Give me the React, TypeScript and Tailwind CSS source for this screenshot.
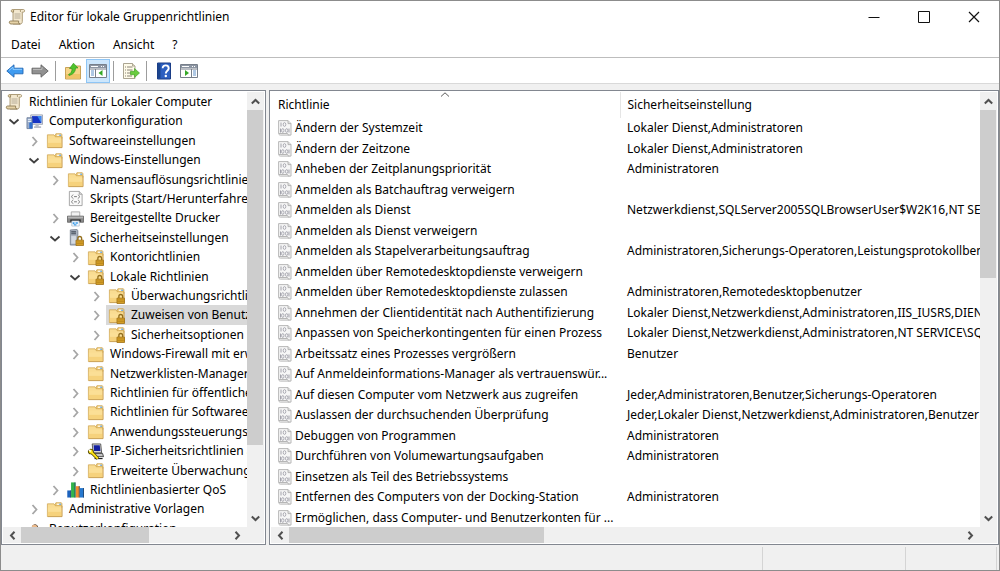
import React, { useState } from 'react';

type IconName = 'scroll' | 'computer' | 'folder' | 'script' | 'printer' | 'server' | 'lockedFolder' | 'ipsec' | 'qos' | 'user';

interface TreeNode {
  label: string;
  level: number;
  icon: IconName;
  state?: 'open' | 'closed';
}

interface Policy {
  name: string;
  setting: string;
}

const treeNodes: TreeNode[] = [
  { label: 'Richtlinien für Lokaler Computer', level: 0, icon: 'scroll' },
  { label: 'Computerkonfiguration', level: 1, icon: 'computer', state: 'open' },
  { label: 'Softwareeinstellungen', level: 2, icon: 'folder', state: 'closed' },
  { label: 'Windows-Einstellungen', level: 2, icon: 'folder', state: 'open' },
  { label: 'Namensauflösungsrichtlinie', level: 3, icon: 'folder', state: 'closed' },
  { label: 'Skripts (Start/Herunterfahren)', level: 3, icon: 'script' },
  { label: 'Bereitgestellte Drucker', level: 3, icon: 'printer', state: 'closed' },
  { label: 'Sicherheitseinstellungen', level: 3, icon: 'server', state: 'open' },
  { label: 'Kontorichtlinien', level: 4, icon: 'lockedFolder', state: 'closed' },
  { label: 'Lokale Richtlinien', level: 4, icon: 'lockedFolder', state: 'open' },
  { label: 'Überwachungsrichtlinie', level: 5, icon: 'lockedFolder', state: 'closed' },
  { label: 'Zuweisen von Benutzerrechten', level: 5, icon: 'lockedFolder', state: 'closed' },
  { label: 'Sicherheitsoptionen', level: 5, icon: 'lockedFolder', state: 'closed' },
  { label: 'Windows-Firewall mit erweiterter Sicherheit', level: 4, icon: 'folder', state: 'closed' },
  { label: 'Netzwerklisten-Manager-Richtlinien', level: 4, icon: 'folder' },
  { label: 'Richtlinien für öffentliche Schlüssel', level: 4, icon: 'folder', state: 'closed' },
  { label: 'Richtlinien für Softwareeinschränkung', level: 4, icon: 'folder', state: 'closed' },
  { label: 'Anwendungssteuerungsrichtlinien', level: 4, icon: 'folder', state: 'closed' },
  { label: 'IP-Sicherheitsrichtlinien auf Lokaler Computer', level: 4, icon: 'ipsec', state: 'closed' },
  { label: 'Erweiterte Überwachungsrichtlinienkonfiguration', level: 4, icon: 'folder', state: 'closed' },
  { label: 'Richtlinienbasierter QoS', level: 3, icon: 'qos', state: 'closed' },
  { label: 'Administrative Vorlagen', level: 2, icon: 'folder', state: 'closed' },
  { label: 'Benutzerkonfiguration', level: 1, icon: 'user' },
];

const policies: Policy[] = [
  { name: 'Ändern der Systemzeit', setting: 'Lokaler Dienst,Administratoren' },
  { name: 'Ändern der Zeitzone', setting: 'Lokaler Dienst,Administratoren' },
  { name: 'Anheben der Zeitplanungspriorität', setting: 'Administratoren' },
  { name: 'Anmelden als Batchauftrag verweigern', setting: '' },
  { name: 'Anmelden als Dienst', setting: 'Netzwerkdienst,SQLServer2005SQLBrowserUser$W2K16,NT SERVICE' },
  { name: 'Anmelden als Dienst verweigern', setting: '' },
  { name: 'Anmelden als Stapelverarbeitungsauftrag', setting: 'Administratoren,Sicherungs-Operatoren,Leistungsprotokollbenutzer' },
  { name: 'Anmelden über Remotedesktopdienste verweigern', setting: '' },
  { name: 'Anmelden über Remotedesktopdienste zulassen', setting: 'Administratoren,Remotedesktopbenutzer' },
  { name: 'Annehmen der Clientidentität nach Authentifizierung', setting: 'Lokaler Dienst,Netzwerkdienst,Administratoren,IIS_IUSRS,DIENST' },
  { name: 'Anpassen von Speicherkontingenten für einen Prozess', setting: 'Lokaler Dienst,Netzwerkdienst,Administratoren,NT SERVICE\\SQL' },
  { name: 'Arbeitssatz eines Prozesses vergrößern', setting: 'Benutzer' },
  { name: 'Auf Anmeldeinformations-Manager als vertrauenswür...', setting: '' },
  { name: 'Auf diesen Computer vom Netzwerk aus zugreifen', setting: 'Jeder,Administratoren,Benutzer,Sicherungs-Operatoren' },
  { name: 'Auslassen der durchsuchenden Überprüfung', setting: 'Jeder,Lokaler Dienst,Netzwerkdienst,Administratoren,Benutzer' },
  { name: 'Debuggen von Programmen', setting: 'Administratoren' },
  { name: 'Durchführen von Volumewartungsaufgaben', setting: 'Administratoren' },
  { name: 'Einsetzen als Teil des Betriebssystems', setting: '' },
  { name: 'Entfernen des Computers von der Docking-Station', setting: 'Administratoren' },
  { name: 'Ermöglichen, dass Computer- und Benutzerkonten für ...', setting: '' },
];

const indents = ['', 'pl-px', 'pl-[21px]', 'pl-[42px]', 'pl-[62px]', 'pl-[83px]'];

function ScrollIcon() {
  return (
    <svg width="18" height="18" viewBox="0 0 18 18" className="shrink-0">
      <path d="M4.5 1.5h11c1.4 0 1.6 2.6 0 2.6h-1.2v9.4c0 1.5-.8 2.500-2 2.500H5V4.200z" fill="#f3e8cf" stroke="#a5936d" strokeWidth=".9" />
      <path d="M4.500 1.500c-1.500 0-1.700 2.600-.3 2.600h1.300l.2-2.500M13 1.800c-.9.6-.9 1.700 0 2.300" fill="#e7d5ab" stroke="#8f7c55" strokeWidth=".8" />
      <path d="M2.500 13h8.200c-.5 1.400.1 3 1.500 3H3c-2.200 0-2.200-3-.5-3z" fill="#e6d3a8" stroke="#8f7c55" strokeWidth=".9" />
      <path d="M6.500 6h6M6.500 8h6M6.500 10h6" stroke="#a59c8c" strokeWidth=".8" />
    </svg>
  );
}

function FolderShape() {
  return (
    <>
      <path d="M9.500 4l1-2.200h5.700l.7 1v4H9.500z" fill="#f1cd78" stroke="#c79a42" strokeWidth=".7" />
      <path d="M11.500 2.800h4.500v1.200h-4.500z" fill="#fff" />
      <path d="M14 2.800h2v1.200h-2z" fill="#4a9be8" />
      <path d="M1.500 3h7l1.300 2h7v11.500H1.500z" fill="#f9dc92" stroke="#cfa652" strokeWidth=".8" />
      <path d="M2 7h14.500v9H2z" fill="#fbdf96" />
      <path d="M2 11.500h14.500v4.500H2z" fill="#f6d27c" />
      <path d="M2 16.500h15v-11" fill="none" stroke="#c2974a" strokeWidth=".7" />
    </>
  );
}

function Padlock() {
  return (
    <>
      <path d="M11.500 12v-1.800c0-3 4-3 4 0V12" fill="none" stroke="#94701f" strokeWidth="1.400" />
      <path d="M9.500 11.800h8v5.700h-8z" fill="#dca62c" stroke="#9a6c12" strokeWidth=".8" />
      <path d="M10 13.700h7M10 15.600h7" stroke="#ad7c14" strokeWidth=".8" />
    </>
  );
}

function TreeIcon({ name }: { name: IconName }) {
  if (name === 'scroll') return <ScrollIcon />;
  return (
    <svg width="17" height="17" viewBox="0 0 18 18" className="shrink-0">
      {name === 'folder' && <FolderShape />}
      {name === 'lockedFolder' && (
        <>
          <FolderShape />
          <Padlock />
        </>
      )}
      {name === 'computer' && (
        <>
          <path d="M5 2h12.500v10H5z" fill="#e2e4ea" stroke="#8d95a8" strokeWidth=".8" />
          <path d="M6.300 3.300h9.900v7.400H6.300z" fill="#1634c4" />
          <path d="M12 3.300h4.200v7.400z" fill="#3e8cf0" />
          <path d="M10 12h3.500v2H10zM8.500 14h7.500v1.800H8.500z" fill="#b8bdc9" />
          <path d="M1 5h5.500v11.500H1z" fill="#9eb0cc" stroke="#5f7291" strokeWidth=".8" />
          <path d="M2 7h3.500M2 9h3.500" stroke="#e9f0fa" />
          <path d="M3.500 11c0-1.500 3.500-1.500 3.500 0v5.500H3.500z" fill="#2f6fd0" />
        </>
      )}
      {name === 'script' && (
        <>
          <path d="M2.500 1.500h10.500l3 3v12h-13.500z" fill="#fafafa" stroke="#9a9a9a" strokeWidth=".9" />
          <path d="M13 1.500v3h3" fill="#ddd" stroke="#9a9a9a" strokeWidth=".9" />
          <path d="M6.700 5c-1.200 0-1.200 2-2 2 .8 0 .8 2 2 2M11.500 5c1.200 0 1.200 2 2 2-.8 0-.8 2-2 2M6.700 10.500c-1.200 0-1.200 2-2 2 .8 0 .8 2 2 2M11.500 10.500c1.200 0 1.200 2 2 2-.8 0-.8 2-2 2" fill="none" stroke="#747474" strokeWidth=".9" />
          <path d="M7.500 7h3M7.500 12.500h3" stroke="#747474" />
        </>
      )}
      {name === 'printer' && (
        <>
          <path d="M4.500 2h9v5h-9z" fill="#f2f2f2" stroke="#999" strokeWidth=".8" />
          <path d="M.5 6.500h17v6.500H.5z" fill="#8a8a8a" stroke="#5c5c5c" strokeWidth=".8" />
          <path d="M1 7h16v1.800H1z" fill="#b6b6b6" />
          <path d="M3.500 10h11v2.500h-11z" fill="#252525" />
          <path d="M5 11.500h8v5.500H5z" fill="#f5faff" stroke="#9ab" strokeWidth=".6" />
          <path d="M6 13h2v2H6zM9 13h2.500v1.500H9zM7.500 15h2.500v1.500H7.500z" fill="#3b9be6" />
        </>
      )}
      {name === 'server' && (
        <>
          <path d="M3.500 1l7-.5 1 1V16.500l-1 .5h-7z" fill="#a9b2bf" stroke="#6d7786" strokeWidth=".8" />
          <path d="M4.500 3h5M4.500 5h5" stroke="#434c59" strokeWidth="1.200" />
          <path d="M4.500 7.500h5v8h-5z" fill="#d3d9e1" />
          <Padlock />
        </>
      )}
      {name === 'ipsec' && (
        <>
          <path d="M5.500 1h9l1 9.500H6.500z" fill="#d5d5d5" stroke="#444" strokeWidth=".9" />
          <path d="M7 2.500h6.500l.7 6H7.500z" fill="#1420a0" />
          <path d="M6 11h10.500l1 3.500H8z" fill="#c4c4c4" stroke="#333" strokeWidth=".9" />
          <path d="M8 16.500h8.500" stroke="#222" strokeWidth="1.200" />
          <path d="M3.500 8.500l8 8" stroke="#514400" strokeWidth="3.600" />
          <circle cx="4" cy="9" r="3" fill="#514400" />
          <path d="M3.500 8.500l8 8" stroke="#ffe619" strokeWidth="2" />
          <circle cx="4" cy="9" r="2" fill="#ffe619" />
          <path d="M1.500 6.500l2.500 2.500" stroke="#fff" strokeWidth="1.500" />
        </>
      )}
      {name === 'qos' && (
        <>
          <path d="M.3 10H4v7.500H.3z" fill="#1c62bd" />
          <path d="M4.300 1.500H9v16H4.300z" fill="#31b44a" />
          <path d="M9.300 5.500h4v12h-4z" fill="#f08c2c" />
          <path d="M13.700 7.500H18v10h-4.300z" fill="#2678cf" />
          <path d="M3.800 10v7.500M8.500 1.500v16M13 5.500v12M17.500 7.500v10" stroke="#24456b" strokeWidth=".9" />
        </>
      )}
      {name === 'user' && (
        <>
          <path d="M6 9c0-6 7-6 7 0z" fill="#4f3a28" />
          <circle cx="9" cy="8" r="3" fill="#eebb8b" />
          <path d="M3 17c0-7 12-7 12 0z" fill="#4b82c4" />
        </>
      )}
    </svg>
  );
}

function Expander({ state }: { state?: 'open' | 'closed' }) {
  return (
    <svg width="20" height="18" viewBox="0 0 20 18" className="shrink-0" fill="none" strokeWidth="1.800">
      {state === 'open' && <path d="M5.500 7.500l4.500 4 4.500-4" stroke="#404040" />}
      {state === 'closed' && <path d="M8.500 5l4 4.500-4 4.500" stroke="#a6a6a6" />}
    </svg>
  );
}

function PolicyIcon() {
  return (
    <svg width="14" height="16" viewBox="0 0 14 16" className="shrink-0">
      <path d="M.6.600h9.400l3 3v11.500H2.500c-1.200 0-1.900-.7-1.900-2z" fill="#f6f6f6" stroke="#b0b0b0" strokeWidth=".9" />
      <path d="M10 .6v3h3M1 13.500h8.500c0 1 .8 1.700 2 1.600" fill="#dedede" stroke="#b0b0b0" strokeWidth=".9" />
      <path d="M3 2.500v4M2.500 8.500v4M11 8.500v4" stroke="#9a9aa4" strokeWidth=".9" />
      <ellipse cx="6.500" cy="4.500" rx="1.300" ry="1.900" fill="none" stroke="#9a9aa4" strokeWidth=".8" />
      <ellipse cx="4.800" cy="10.500" rx="1.200" ry="1.900" fill="none" stroke="#9a9aa4" strokeWidth=".8" />
      <ellipse cx="8.700" cy="10.500" rx="1.200" ry="1.900" fill="none" stroke="#9a9aa4" strokeWidth=".8" />
    </svg>
  );
}

function ToolButton({ label, active = false, children }: { label: string; active?: boolean; children: React.ReactNode }) {
  return (
    <button
      aria-label={label}
      className={`flex h-6 w-6 items-center justify-center border ${active ? 'border-[#8ec5f5] bg-[#cce6fc]' : 'border-transparent'}`}
    >
      <svg width="18" height="18" viewBox="0 0 18 18" className="shrink-0">
        {children}
      </svg>
    </button>
  );
}

function Separator() {
  return <div className="mr-1 ml-0.5 h-5 w-px bg-[#9d9d9d]" />;
}

function Toolbar() {
  return (
    <div className="flex h-[26px] items-center gap-px border-b border-[#d9d9d9] pt-px pl-0.5">
      <ToolButton label="Zurück">
        <path d="M.8 9L8 2.800v3.400h9v5.600H8v3.400z" fill="#3f9bf0" stroke="#2268b4" strokeWidth=".9" />
        <path d="M3 8.500l4-3.400v2.300h9" fill="none" stroke="#8ccbff" />
      </ToolButton>
      <ToolButton label="Vorwärts">
        <path d="M17.200 9L10 2.800v3.400H1v5.600h9v3.400z" fill="#919191" stroke="#626262" strokeWidth=".9" />
        <path d="M2 7.400h9V5.100" fill="none" stroke="#bdbdbd" />
      </ToolButton>
      <Separator />
      <ToolButton label="Eine Ebene nach oben">
        <path d="M1.500 5.500h6l1.500-1.500h7.500v13h-15z" fill="#f7d588" stroke="#c29a4c" strokeWidth=".9" />
        <path d="M2 12h14v4.500H2z" fill="#f0c469" />
        <path d="M4.500 12.500c2.500-1 3.500-3 3.500-6H5.500l4-5.300L14 6h-2.500c0 4-2.500 6.500-6.500 7.500z" fill="#4fc32c" stroke="#2b9018" strokeWidth=".6" />
      </ToolButton>
      <ToolButton label="Konsolenstruktur anzeigen" active>
        <path d="M.5 2.500h17v13H.5z" fill="#fff" stroke="#777f8a" />
        <path d="M1 3h16v3H1z" fill="#8d96a3" />
        <path d="M12 4.500h1M14 4.500h1M2 4.500h7" stroke="#fff" />
        <path d="M1 7h16M6.500 7v8" stroke="#777f8a" />
        <path d="M2 9h3M2 11h3M2 13h3" stroke="#5f91c9" />
        <path d="M13.500 8v6l-4-3z" fill="#36a927" />
      </ToolButton>
      <Separator />
      <ToolButton label="Liste exportieren">
        <path d="M1.500 1.500h9l2.500 2.500v12.500H1.500z" fill="#fffbe9" stroke="#a19b87" strokeWidth=".9" />
        <path d="M10.500 1.500v2.500H13" fill="#e5dfc8" stroke="#a19b87" strokeWidth=".8" />
        <path d="M5 5h5.500M5 8h5.500M5 11h4M5 14h5M3 5h1M3 8h1M3 11h1M3 14h1" stroke="#8a8478" />
        <path d="M8.500 9.300h4V6.500l5 4.500-5 4.500v-2.800h-4z" fill="#69cc3e" stroke="#3a9c22" strokeWidth=".6" />
      </ToolButton>
      <Separator />
      <ToolButton label="Hilfe">
        <path d="M2.500 1h13v16h-13z" fill="#2c5fc0" stroke="#1a3d86" />
        <path d="M3 1.500h2.500v15H3z" fill="#1b458f" />
        <path d="M7.700 6.300c0-4 6-3.700 6 0 0 2.500-2.900 2.500-2.900 5.200" fill="none" stroke="#fff" strokeWidth="1.900" />
        <circle cx="10.800" cy="14" r="1.200" fill="#fff" />
      </ToolButton>
      <ToolButton label="Aktionsbereich anzeigen">
        <path d="M.5 2.500h17v13H.5z" fill="#fff" stroke="#777f8a" />
        <path d="M1 3h16v3H1z" fill="#8d96a3" />
        <path d="M12 4.500h1M14 4.500h1M2 4.500h7" stroke="#fff" />
        <path d="M1 7h16M11.500 7v8" stroke="#777f8a" />
        <path d="M13 9h3M13 11h3M13 13h3" stroke="#5f91c9" />
        <path d="M5 8v6l4-3z" fill="#36a927" />
      </ToolButton>
    </div>
  );
}

function Arrow({ d }: { d: string }) {
  return (
    <svg width="9" height="9" viewBox="0 0 9 9" fill="none" stroke="#505050" strokeWidth="2">
      <path d={d} />
    </svg>
  );
}

// thumb is the share of the track that it covers, 0..1
function VerticalScrollbar({ thumb }: { thumb: number }) {
  return (
    <div className="flex w-[17px] shrink-0 flex-col bg-[#f0f0f0]">
      <button aria-label="Nach oben" className="flex h-[18px] items-center justify-center"><Arrow d="M.8 6.500L4.500 3l3.700 3.500" /></button>
      <div className="min-h-0 flex-1">
        <div className="w-4 bg-[#cdcdcd]" style={{ height: `${thumb * 100}%` }} />
      </div>
      <button aria-label="Nach unten" className="flex h-[18px] items-center justify-center"><Arrow d="M.8 2.500L4.500 6l3.700-3.500" /></button>
    </div>
  );
}

function HorizontalScrollbar({ thumb }: { thumb: number }) {
  return (
    <div className="mr-[18px] flex h-4 bg-[#f0f0f0]">
      <button aria-label="Nach links" className="flex w-[18px] items-center justify-center"><Arrow d="M6.500.8L3 4.500l3.500 3.700" /></button>
      <div className="min-w-0 flex-1">
        <div className="h-4 bg-[#cdcdcd]" style={{ width: `${thumb * 100}%` }} />
      </div>
      <button aria-label="Nach rechts" className="flex w-[18px] items-center justify-center"><Arrow d="M2.500.8L6 4.500 2.500 8.200" /></button>
    </div>
  );
}

function Pane({ className, vertical, horizontal, children }: { className: string; vertical: number; horizontal: number; children: React.ReactNode }) {
  return (
    <section className={`flex flex-col border border-[#828790] bg-white p-px ${className}`}>
      <div className="flex min-h-0 flex-1">
        <div className="min-w-0 flex-1 overflow-hidden">{children}</div>
        <VerticalScrollbar thumb={vertical} />
      </div>
      <div className="bg-[#f0f0f0]">
        <HorizontalScrollbar thumb={horizontal} />
      </div>
    </section>
  );
}

function ConsoleTree() {
  const [selected, setSelected] = useState('Zuweisen von Benutzerrechten');

  return (
    <ul role="tree">
      {treeNodes.map((node) => (
        <li
          key={node.label}
          role="treeitem"
          aria-level={node.level + 1}
          aria-selected={node.label === selected}
          onClick={() => setSelected(node.label)}
          className={`flex h-[19px] items-center nth-[5n+2]:h-5 nth-[5n+4]:h-5 ${indents[node.level]}`}
        >
          {node.level > 0 && <Expander state={node.state} />}
          <div className={`flex h-full min-w-0 flex-1 items-center gap-1 overflow-hidden pl-0.5 ${node.label === selected ? 'bg-[#d9d9d9]' : ''}`}>
            <TreeIcon name={node.icon} />
            <span className="pl-0.5 whitespace-nowrap">{node.label}</span>
          </div>
        </li>
      ))}
    </ul>
  );
}

function PolicyTable() {
  return (
    <table className="w-full table-fixed border-collapse text-left">
      <thead>
        <tr className="h-[26px]">
          <th className="relative w-[349px] border-r border-[#e5e5e5] p-0 pl-[7px] font-normal">
            Richtlinie
            <svg width="9" height="5" viewBox="0 0 9 5" className="absolute top-0 left-1/2 -translate-x-1/2" fill="none" stroke="#5c5c5c">
              <path d="M.5 4.500l4-3.700 4 3.700" />
            </svg>
          </th>
          <th className="p-0 pl-[7px] font-normal">Sicherheitseinstellung</th>
        </tr>
      </thead>
      <tbody>
        {policies.map((policy) => (
          <tr key={policy.name} className="h-5 even:h-[21px]">
            <td className="overflow-hidden p-0 pl-[7px] whitespace-nowrap">
              <div className="flex items-center gap-[3px]">
                <PolicyIcon />
                {policy.name}
              </div>
            </td>
            <td className="overflow-hidden p-0 pl-[7px] whitespace-nowrap">{policy.setting}</td>
          </tr>
        ))}
      </tbody>
    </table>
  );
}

export default function App() {
  return (
    <div className="flex h-screen flex-col overflow-hidden border border-[#8c8c8c] bg-[#f0f0f0] font-['Noto_Sans','Open_Sans',sans-serif] text-[12px] leading-4 text-black">
      <header className="bg-white">
        <div className="flex h-8 items-center pl-[7px]">
          <ScrollIcon />
          <h1 className="flex-1 pl-1">Editor für lokale Gruppenrichtlinien</h1>
          <button aria-label="Minimieren" className="flex h-full w-[50px] items-center justify-center">
            <svg width="12" height="12" viewBox="0 0 12 12" stroke="#111"><path d="M.5 6.500h11" /></svg>
          </button>
          <button aria-label="Maximieren" className="flex h-full w-[50px] items-center justify-center">
            <svg width="12" height="12" viewBox="0 0 12 12" fill="none" stroke="#111"><path d="M.5.500h11v11H.5z" /></svg>
          </button>
          <button aria-label="Schließen" className="flex h-full w-[50px] items-center justify-center">
            <svg width="12" height="12" viewBox="0 0 12 12" stroke="#111" strokeWidth="1.200"><path d="M1 1l10 10M11 1L1 11" /></svg>
          </button>
        </div>
        <nav className="flex h-[25px] items-center gap-[18px] border-b border-[#bdbdbd] pl-2.5">
          <button>Datei</button>
          <button>Aktion</button>
          <button>Ansicht</button>
          <button>?</button>
        </nav>
        <Toolbar />
      </header>

      <main className="flex min-h-0 flex-1 gap-[3px] pt-1.5">
        <Pane className="w-[265px] shrink-0" vertical={0.84} horizontal={0.62}>
          <ConsoleTree />
        </Pane>
        <Pane className="min-w-0 flex-1" vertical={0.42} horizontal={0.38}>
          <PolicyTable />
        </Pane>
      </main>

      <footer className="flex h-[25px] shrink-0 pt-0.5">
        <div className="flex-1" />
        <div className="w-[143px] border-l border-[#d4d4d4]" />
        <div className="mr-0.5 w-[92px] border-x border-[#d4d4d4]" />
      </footer>
    </div>
  );
}
